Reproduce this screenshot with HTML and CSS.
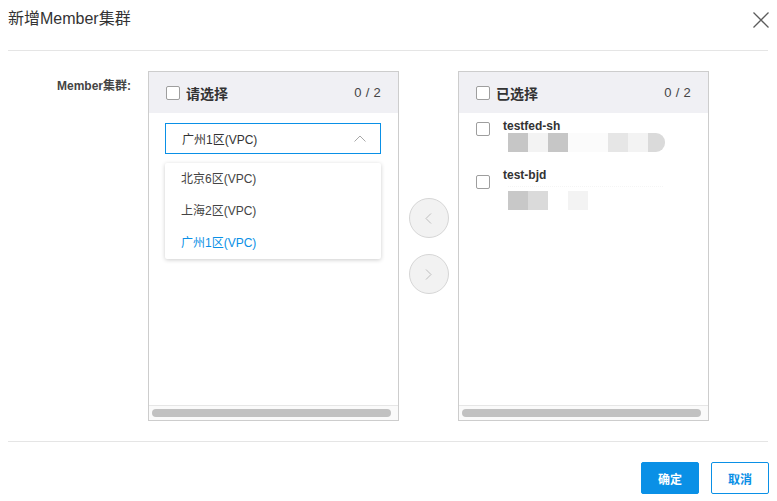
FILE: index.html
```html
<!DOCTYPE html>
<html lang="zh-CN">
<head>
<meta charset="utf-8">
<title>新增Member集群</title>
<link rel="stylesheet" href="styles.css">
</head>
<body>
<div class="dialog">
  <div class="dlg-hd">
    <h3 class="dlg-title">新增Member集群</h3>
    <button class="dlg-close" aria-label="关闭">
      <svg width="16" height="16" viewBox="0 0 16 16"><path d="M0.5 0.5 L15.5 15.5 M15.5 0.5 L0.5 15.5" stroke="#5c5c5c" stroke-width="1.3" fill="none"/></svg>
    </button>
  </div>

  <div class="dlg-bd">
    <div class="form-row">
      <label class="form-label">Member集群:</label>
      <div class="transfer">
        <div class="panel">
          <div class="panel-hd">
            <span class="cb"></span>
            <span class="panel-title">请选择</span>
            <span class="panel-count">0 / 2</span>
          </div>
          <div class="panel-body pad-select">
            <div class="select-wrap">
              <div class="select">
                <span>广州1区(VPC)</span>
                <svg class="select-arrow" width="12" height="7" viewBox="0 0 12 7"><path d="M0.5 6.5 L6 1 L11.5 6.5" stroke="#a8a8a8" stroke-width="1" fill="none"/></svg>
              </div>
              <ul class="dropdown">
                <li class="opt">北京6区(VPC)</li>
                <li class="opt">上海2区(VPC)</li>
                <li class="opt selected">广州1区(VPC)</li>
              </ul>
            </div>
          </div>
          <div class="panel-ft"><div class="thumb"></div></div>
        </div>

        <div class="ops">
          <button class="op" aria-label="左移">
            <svg width="7" height="11" viewBox="0 0 7 11"><path d="M6 0.5 L1 5.5 L6 10.5" stroke="#bdbdbd" stroke-width="1" fill="none"/></svg>
          </button>
          <button class="op" aria-label="右移">
            <svg width="7" height="11" viewBox="0 0 7 11"><path d="M1 0.5 L6 5.5 L1 10.5" stroke="#bdbdbd" stroke-width="1" fill="none"/></svg>
          </button>
        </div>

        <div class="panel">
          <div class="panel-hd">
            <span class="cb"></span>
            <span class="panel-title">已选择</span>
            <span class="panel-count">0 / 2</span>
          </div>
          <div class="panel-body pad-list">
            <div class="item">
              <span class="cb item-cb"></span>
              <div class="item-main">
                <div class="item-name">testfed-sh</div>
                <div class="blur">
                  <span class="bk c1"></span><span class="bk c2"></span><span class="bk c1"></span><span class="bk c3"></span><span class="bk c3"></span><span class="bk c4"></span><span class="bk c5"></span><span class="bk c6 end"></span>
                </div>
              </div>
            </div>
            <div class="item item-2">
              <span class="cb item-cb cb-low"></span>
              <div class="item-main">
                <div class="item-name">test-bjd</div>
                <div class="dots"></div>
                <div class="blur">
                  <span class="bk c7"></span><span class="bk c6"></span><span class="bk c8"></span><span class="bk c5"></span>
                </div>
              </div>
            </div>
          </div>
          <div class="panel-ft"><div class="thumb"></div></div>
        </div>
      </div>
    </div>
  </div>

  <div class="dlg-ft">
    <button class="btn btn-primary">确定</button>
    <button class="btn btn-default">取消</button>
  </div>
</div>
</body>
</html>
```

FILE: styles.css
```css
* { box-sizing: border-box; }
html, body { margin: 0; padding: 0; background: #fff; }
body {
  font-family: "Liberation Sans", "Noto Sans CJK SC", sans-serif;
  font-size: 12px;
  color: #333;
}
ul { margin: 0; padding: 0; list-style: none; }
button { font-family: inherit; cursor: pointer; }

.dialog { width: 777px; height: 501px; }

.dlg-hd {
  margin: 0 9px 0 8px;
  height: 51px;
  border-bottom: 1px solid #e5e5e5;
  display: flex;
  justify-content: space-between;
  align-items: flex-start;
}
.dlg-title {
  margin: 0;
  font-size: 16px;
  font-weight: normal;
  line-height: 38px;
  color: #333;
}
.dlg-close {
  border: 0;
  background: none;
  padding: 0;
  margin: 12px -1px 0 0;
  width: 16px;
  height: 16px;
  display: flex;
}

.dlg-bd { padding: 20px 0 20px 0; }
.form-row { display: flex; align-items: flex-start; }
.form-label {
  width: 131px;
  margin-right: 17px;
  text-align: right;
  font-weight: bold;
  color: #444;
  font-size: 12px;
  line-height: 18px;
  padding-top: 6px;
}

.transfer { display: flex; align-items: stretch; }
.panel {
  width: 251px;
  height: 350px;
  border: 1px solid #cdcdcd;
  display: flex;
  flex-direction: column;
  background: #fff;
}
.panel-hd {
  height: 41px;
  flex: none;
  background: #f0f0f4;
  display: flex;
  align-items: center;
  padding: 0 17px 0 17px;
}
.cb {
  width: 14px;
  height: 14px;
  border: 1px solid #9e9e9e;
  border-radius: 2px;
  background: #fff;
  flex: none;
}
.panel-hd .cb { margin-top: 1px; }
.panel-title {
  margin-left: 6px;
  font-size: 14px;
  font-weight: bold;
  color: #333;
  flex: 1;
}
.panel-count { font-size: 13px; color: #444; letter-spacing: 0.3px; }

.panel-body { flex: 1; position: relative; }
.pad-select { padding: 10px 16px 0 16px; }
.pad-list { padding: 7px 17px 0 17px; }

.panel-ft {
  height: 15px;
  flex: none;
  border-top: 1px solid #e6e6e6;
  background: #fafafa;
  padding: 3px 7px 0 3px;
}
.thumb { height: 8px; border-radius: 4px; background: #c1c1c1; }

.select-wrap { position: relative; width: 216px; }
.select {
  height: 31px;
  border: 1px solid #0a90e6;
  display: flex;
  align-items: center;
  justify-content: space-between;
  padding: 0 14px 0 16px;
  color: #333;
  font-size: 12px;
}
.select-arrow { margin-top: -1px; }

.dropdown {
  position: absolute;
  left: 0;
  right: 0;
  top: 40px;
  background: #fff;
  border-radius: 2px;
  box-shadow: 0 1px 4px rgba(0, 0, 0, 0.2);
  z-index: 2;
}
.opt {
  height: 32px;
  line-height: 32px;
  padding-left: 16px;
  color: #444;
  font-size: 12px;
}
.opt.selected { color: #0a90e6; }

.ops {
  width: 59px;
  display: flex;
  flex-direction: column;
  align-items: center;
  justify-content: center;
  gap: 16px;
}
.op {
  width: 40px;
  height: 40px;
  border-radius: 50%;
  border: 1px solid #d6d6d6;
  background: #f2f2f2;
  padding: 0;
  display: flex;
  align-items: center;
  justify-content: center;
}

.item { display: flex; align-items: flex-start; }
.item-cb { margin-top: 2px; width: 14px; height: 14px; }
.cb-low { margin-top: 6px; }
.item-2 { margin-top: 17px; }
.item-main { margin-left: 13px; }
.item-name {
  font-weight: bold;
  font-size: 12px;
  line-height: 13px;
  color: #333;
}
.blur { display: flex; margin-left: 5px; height: 19px; }
.bk { width: 20px; height: 19px; display: block; }
.bk.end { width: 17px; border-radius: 0 9px 9px 0; }
.c1 { background: #c6c6c6; }
.c2 { background: #f3f3f3; }
.c3 { background: #fbfbfb; }
.c4 { background: #e6e6e6; }
.c5 { background: #f3f3f3; }
.c6 { background: #dadada; }
.c7 { background: #c8c8c8; }
.c8 { background: #ffffff; }
.dots {
  margin-left: 5px;
  width: 155px;
  border-top: 1px dotted #f5f5f5;
  margin-top: 4px;
  height: 5px;
}

.dlg-ft {
  margin: 0 9px 0 8px;
  border-top: 1px solid #e5e5e5;
  padding-top: 20px;
  display: flex;
  justify-content: flex-end;
  gap: 12px;
}
.btn {
  width: 58px;
  height: 32px;
  border-radius: 2px;
  font-size: 12px;
  font-weight: bold;
  padding: 0;
}
.btn-primary { background: #0a90e6; border: 1px solid #0a90e6; color: #fff; }
.btn-default { background: #fff; border: 1px solid #0a90e6; color: #0a90e6; margin-right: -1px; }
```
